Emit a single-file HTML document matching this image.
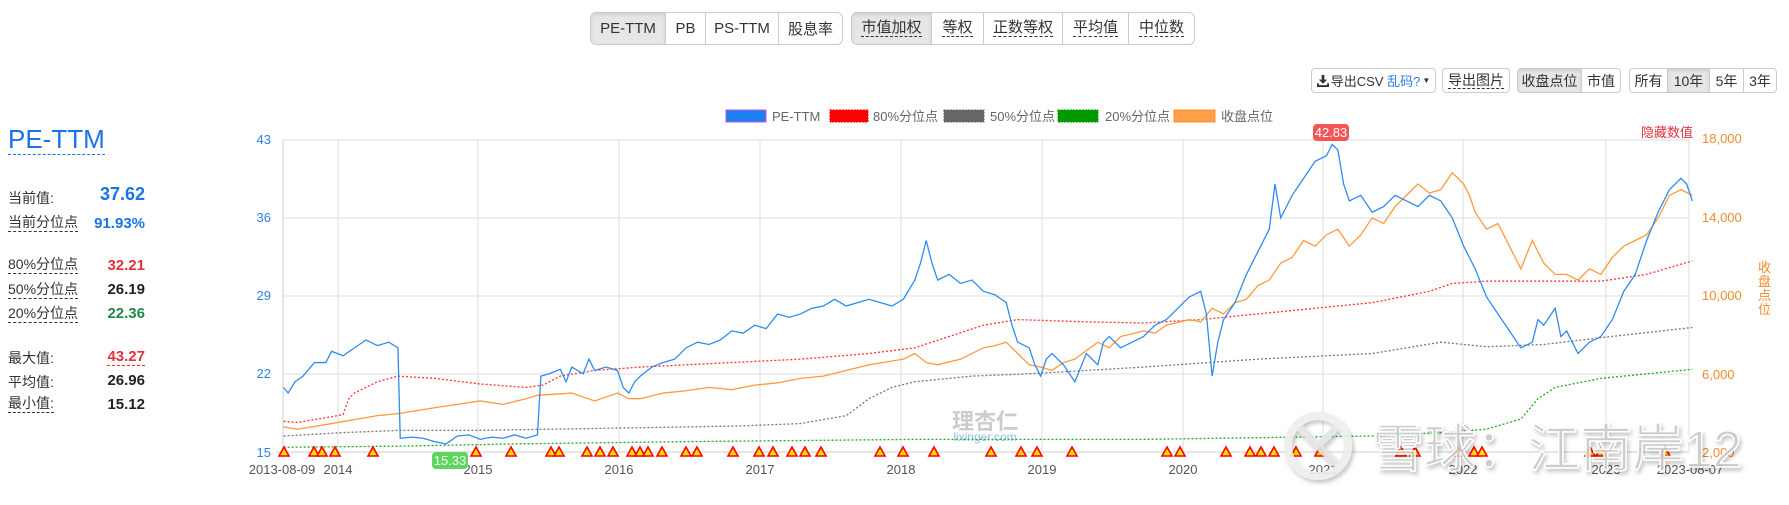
<!DOCTYPE html>
<html><head><meta charset="utf-8">
<style>
*{margin:0;padding:0;box-sizing:border-box;white-space:nowrap}
body{width:1789px;height:505px;background:#fff;font-family:"Liberation Sans","Noto Sans CJK SC",sans-serif;position:relative;overflow:hidden;color:#333}
.grp{position:absolute;display:flex;border:1px solid #ccc;border-radius:6px;overflow:hidden;background:#fff}
.grp div{border-right:1px solid #ccc;display:flex;align-items:center;justify-content:center;font-size:15px;color:#333}
.grp div:last-child{border-right:none}
.grp .on{background:#e6e6e6;box-shadow:inset 0 2px 3px rgba(0,0,0,.1)}
.dl{border-bottom:1px dashed #333;line-height:16px}
.sm div{font-size:14px}
.lab{position:absolute;left:8px;font-size:14px;color:#333}
.lab.d{border-bottom:1px dashed #333;line-height:17px}
.val{position:absolute;right:1644px;font-size:15px;font-weight:bold;text-align:right}
</style></head><body>

<div class="grp" style="left:590px;top:12px;height:33px">
<div class="on" style="width:75px">PE-TTM</div><div style="width:40px">PB</div><div style="width:73px">PS-TTM</div><div style="width:63px">股息率</div></div>
<div class="grp" style="left:851px;top:12px;height:33px">
<div class="on" style="width:80px"><span class="dl">市值加权</span></div><div style="width:52px"><span class="dl">等权</span></div><div style="width:79px"><span class="dl">正数等权</span></div><div style="width:66px"><span class="dl">平均值</span></div><div style="width:65px"><span class="dl">中位数</span></div></div>

<div class="grp sm" style="left:1311px;top:68px;height:25px;border-radius:4px"><div style="width:123px;font-size:13px">
<svg width="12" height="12" viewBox="0 0 13 13" style="margin-right:2px"><path d="M5 0h3v5h3l-4.5 4.5L2 5h3z" fill="#333"/><path d="M0 9v4h13V9h-2v2H2V9z" fill="#333"/></svg>导出CSV&nbsp;<span style="color:#2a7ae2">乱码?</span><span style="font-size:8px;margin-left:2px">▼</span></div></div>
<div class="grp sm" style="left:1442px;top:68px;height:25px;border-radius:4px"><div style="width:66px"><span class="dl">导出图片</span></div></div>
<div class="grp sm" style="left:1517px;top:68px;height:25px;border-radius:4px"><div class="on" style="width:64px">收盘点位</div><div style="width:38px">市值</div></div>
<div class="grp sm" style="left:1629px;top:68px;height:25px;border-radius:4px"><div style="width:38px">所有</div><div class="on" style="width:42px">10年</div><div style="width:34px">5年</div><div style="width:32px">3年</div></div>

<div style="position:absolute;left:8px;top:124px;font-size:26px;color:#1a73e8;border-bottom:1px dashed #1a73e8;line-height:30px">PE-TTM</div>
<div class="lab" style="top:188px">当前值:</div><div class="val" style="top:184px;color:#1a73e8;font-size:18px">37.62</div>
<div class="lab d" style="top:214px">当前分位点</div><div class="val" style="top:215px;color:#1a73e8">91.93%</div>
<div class="lab d" style="top:256px">80%分位点</div><div class="val" style="top:257px;color:#e0313f">32.21</div>
<div class="lab d" style="top:281px">50%分位点</div><div class="val" style="top:281px;color:#222">26.19</div>
<div class="lab d" style="top:305px">20%分位点</div><div class="val" style="top:305px;color:#1d8a4a">22.36</div>
<div class="lab" style="top:348px">最大值:</div><div class="val" style="top:348px;color:#e0313f;border-bottom:1px dashed #e0313f;line-height:17px">43.27</div>
<div class="lab" style="top:372px">平均值:</div><div class="val" style="top:372px;color:#222">26.96</div>
<div class="lab d" style="top:395px">最小值:</div><div class="val" style="top:396px;color:#222">15.12</div>

<svg width="1789" height="505" style="position:absolute;left:0;top:0" font-family="Liberation Sans, Noto Sans CJK SC, sans-serif">
<defs><filter id="sh" x="-10%" y="-10%" width="120%" height="130%"><feDropShadow dx="2" dy="3" stdDeviation="2" flood-color="#000" flood-opacity="0.25"/></filter></defs>
<g font-size="13" fill="#666">
<rect x="726" y="110" width="40" height="12" fill="#1a7ff0" stroke="#d050e0"/><text x="772" y="121">PE-TTM</text>
<rect x="830" y="110" width="38" height="12" fill="#f00" stroke="#f00" stroke-dasharray="2 1"/><text x="873" y="121">80%分位点</text>
<rect x="944" y="110" width="40" height="12" fill="#666" stroke="#666" stroke-dasharray="2 1"/><text x="990" y="121">50%分位点</text>
<rect x="1058" y="110" width="40" height="12" fill="#090" stroke="#090" stroke-dasharray="2 1"/><text x="1105" y="121">20%分位点</text>
<rect x="1174" y="110" width="41" height="12" fill="#ff9f48" stroke="#ff9030"/><text x="1221" y="121">收盘点位</text>
</g>
<g stroke="#ddd" stroke-width="1">
<line x1="283" y1="140" x2="1689" y2="140"/><line x1="283" y1="218" x2="1689" y2="218"/><line x1="283" y1="296" x2="1689" y2="296"/><line x1="283" y1="374" x2="1689" y2="374"/><line x1="276" y1="452" x2="1689" y2="452" stroke="#ccc"/>
<line x1="338" y1="140" x2="338" y2="452"/><line x1="478" y1="140" x2="478" y2="452"/><line x1="619" y1="140" x2="619" y2="452"/><line x1="760" y1="140" x2="760" y2="452"/><line x1="901" y1="140" x2="901" y2="452"/><line x1="1042" y1="140" x2="1042" y2="452"/><line x1="1183" y1="140" x2="1183" y2="452"/><line x1="1323" y1="140" x2="1323" y2="452"/><line x1="1463" y1="140" x2="1463" y2="452"/><line x1="1606" y1="140" x2="1606" y2="452"/><line x1="1689" y1="140" x2="1689" y2="452"/>
<line x1="283" y1="140" x2="283" y2="458" stroke="#ccc"/>
</g>
<g font-size="13" fill="#2a82e8" text-anchor="end">
<text x="271" y="144">43</text><text x="271" y="222">36</text><text x="271" y="300">29</text><text x="271" y="378">22</text><text x="271" y="457">15</text></g>
<g font-size="13" fill="#f08a2a">
<text x="1702" y="143">18,000</text><text x="1702" y="222">14,000</text><text x="1702" y="300">10,000</text><text x="1702" y="379">6,000</text><text x="1702" y="457">2,000</text></g>
<text x="1641" y="137" font-size="13" fill="#e0313f">隐藏数值</text>
<g font-size="13" fill="#f08a2a"><text x="1758" y="272">收</text><text x="1758" y="286">盘</text><text x="1758" y="300">点</text><text x="1758" y="314">位</text></g>
<g font-size="13" fill="#555" text-anchor="middle">
<text x="282" y="474">2013-08-09</text><text x="338" y="474">2014</text><text x="478" y="474">2015</text><text x="619" y="474">2016</text><text x="760" y="474">2017</text><text x="901" y="474">2018</text><text x="1042" y="474">2019</text><text x="1183" y="474">2020</text><text x="1323" y="474">2021</text><text x="1463" y="474">2022</text><text x="1606" y="474">2023</text><text x="1690" y="474">2023-08-07</text></g>

<text x="985" y="429" font-size="22" fill="#ccc" text-anchor="middle" font-weight="bold">理杏仁</text>
<text x="985" y="441" font-size="12" fill="#8cbbe8" text-anchor="middle">lixinger.com</text>

<g transform="translate(0,3.2) scale(1.1435,1.130)" fill="none" stroke-width="1.3">
<polyline vector-effect="non-scaling-stroke" stroke="#ff3333" stroke-dasharray="2 2" points="248,370 260,371 290,366 300,364 305,350 310,345 330,335 348,330 380,332 420,337 460,340 475,338 490,330 520,325 560,322 600,320 640,318 700,315 760,310 800,305 830,295 860,285 890,280 950,282 1000,283 1050,280 1100,275 1150,270 1200,265 1250,255 1270,248 1300,246 1400,246 1440,240 1480,228"/>
<polyline vector-effect="non-scaling-stroke" stroke="#777" stroke-dasharray="2 2" points="248,383 300,380 350,378 420,378 480,377 540,376 600,375 650,374 700,372 740,365 760,350 780,340 800,335 850,330 900,328 1000,322 1100,315 1200,310 1260,300 1300,304 1350,302 1400,296 1480,287"/>
<polyline vector-effect="non-scaling-stroke" stroke="#2a2" stroke-dasharray="2 2" points="248,393 350,392 450,390 600,388 800,386 1000,386 1200,383 1260,380 1300,377 1330,368 1345,350 1360,340 1400,332 1440,328 1480,324"/>
<polyline vector-effect="non-scaling-stroke" stroke="#ff9a3c" points="248,375 260,377 290,372 330,365 350,363 380,358 420,352 440,355 460,350 470,347 500,345 520,352 540,345 550,350 560,350 580,345 600,343 620,340 640,342 660,338 680,336 700,332 720,330 740,325 760,320 790,315 800,310 810,318 820,320 840,315 860,305 870,303 880,300 890,310 900,320 910,322 920,325 930,318 940,315 960,300 970,305 980,295 1000,290 1010,292 1020,285 1040,280 1050,282 1060,270 1070,275 1080,265 1090,262 1100,250 1110,245 1120,230 1130,225 1140,210 1150,215 1160,205 1170,200 1180,215 1190,205 1200,190 1210,195 1220,180 1230,170 1240,160 1250,168 1260,165 1270,150 1280,160 1285,170 1290,185 1300,200 1310,195 1320,215 1330,235 1340,210 1350,230 1360,240 1370,240 1380,245 1390,235 1400,240 1410,225 1420,215 1430,210 1440,205 1450,190 1460,170 1470,165 1480,170"/>
<polyline vector-effect="non-scaling-stroke" stroke="#2f8cf0" points="248,340 252,345 258,335 265,330 275,318 285,318 290,308 300,312 310,305 320,298 330,303 340,300 348,305 350,385 360,384 370,385 380,388 390,390 400,383 410,382 420,386 430,384 440,385 450,382 460,385 470,382 473,330 480,328 490,324 495,335 500,322 510,328 515,315 520,325 530,322 540,325 545,340 550,345 555,335 560,330 570,322 580,318 590,315 600,305 610,300 620,302 630,298 640,290 650,292 660,285 670,288 680,275 690,278 700,275 710,270 720,268 730,262 740,268 750,265 760,262 770,265 780,268 790,262 800,245 805,230 810,210 815,230 820,245 830,240 840,248 850,245 860,255 870,258 880,265 885,285 890,300 900,305 905,320 910,330 915,315 920,310 930,320 940,335 950,310 960,320 965,300 970,295 980,305 990,300 1000,295 1010,285 1020,280 1030,270 1040,260 1050,255 1055,275 1060,330 1065,300 1070,280 1080,265 1090,240 1100,220 1110,200 1115,160 1120,190 1130,170 1140,155 1150,140 1160,135 1165,125 1170,130 1175,160 1180,175 1190,170 1200,185 1210,180 1220,170 1230,175 1240,180 1250,170 1260,175 1270,190 1280,215 1290,235 1300,260 1310,275 1320,290 1330,305 1340,300 1345,280 1350,285 1360,270 1365,295 1370,290 1380,310 1390,300 1400,295 1410,280 1420,255 1430,240 1440,210 1450,185 1460,165 1470,155 1475,160 1480,175"/>
</g>

<g fill="#ffe000" stroke="#f00" stroke-width="1.6">
<polygon points="284,447 279,456 289,456"/>
<polygon points="314,447 309,456 319,456"/><polygon points="322,447 317,456 327,456"/><polygon points="335,447 330,456 340,456"/><polygon points="373,447 368,456 378,456"/><polygon points="476,447 471,456 481,456"/><polygon points="511,447 506,456 516,456"/><polygon points="551,447 546,456 556,456"/><polygon points="559,447 554,456 564,456"/><polygon points="587,447 582,456 592,456"/><polygon points="600,447 595,456 605,456"/><polygon points="613,447 608,456 618,456"/><polygon points="632,447 627,456 637,456"/><polygon points="640,447 635,456 645,456"/><polygon points="648,447 643,456 653,456"/><polygon points="662,447 657,456 667,456"/><polygon points="686,447 681,456 691,456"/><polygon points="697,447 692,456 702,456"/><polygon points="733,447 728,456 738,456"/><polygon points="759,447 754,456 764,456"/><polygon points="773,447 768,456 778,456"/><polygon points="792,447 787,456 797,456"/><polygon points="805,447 800,456 810,456"/><polygon points="821,447 816,456 826,456"/><polygon points="880,447 875,456 885,456"/><polygon points="903,447 898,456 908,456"/><polygon points="934,447 929,456 939,456"/><polygon points="991,447 986,456 996,456"/><polygon points="1021,447 1016,456 1026,456"/><polygon points="1037,447 1032,456 1042,456"/><polygon points="1072,447 1067,456 1077,456"/><polygon points="1167,447 1162,456 1172,456"/><polygon points="1180,447 1175,456 1185,456"/><polygon points="1226,447 1221,456 1231,456"/><polygon points="1250,447 1245,456 1255,456"/><polygon points="1261,447 1256,456 1266,456"/><polygon points="1274,447 1269,456 1279,456"/><polygon points="1296,447 1291,456 1301,456"/><polygon points="1320,447 1315,456 1325,456"/><polygon points="1401,447 1396,456 1406,456"/><polygon points="1415,447 1410,456 1420,456"/><polygon points="1458,447 1453,456 1463,456"/><polygon points="1474,447 1469,456 1479,456"/><polygon points="1482,447 1477,456 1487,456"/><polygon points="1590,447 1585,456 1595,456"/><polygon points="1601,447 1596,456 1606,456"/><polygon points="1665,447 1660,456 1670,456"/>
</g>

<rect x="1313" y="124" width="36" height="17" rx="4" fill="#f25555"/><text x="1331" y="137" font-size="13" fill="#fff" text-anchor="middle">42.83</text>
<rect x="432" y="452" width="36" height="17" rx="4" fill="#5cd65c"/><text x="450" y="465" font-size="13" fill="#fff" text-anchor="middle">15.33</text>

<g opacity="0.9" filter="url(#sh)">
<circle cx="1318" cy="446" r="30" fill="none" stroke="#eee" stroke-width="8"/>
<path d="M1300 428 L1336 464 M1336 428 L1318 446" stroke="#e4e4e4" stroke-width="7" fill="none"/>
<text x="1372" y="467" font-size="52" fill="#c8c8c8" stroke="#fff" stroke-width="1.5" font-family="Liberation Sans, Noto Sans CJK SC, sans-serif">雪球：江南岸12</text>
</g>
</svg>
</body></html>
